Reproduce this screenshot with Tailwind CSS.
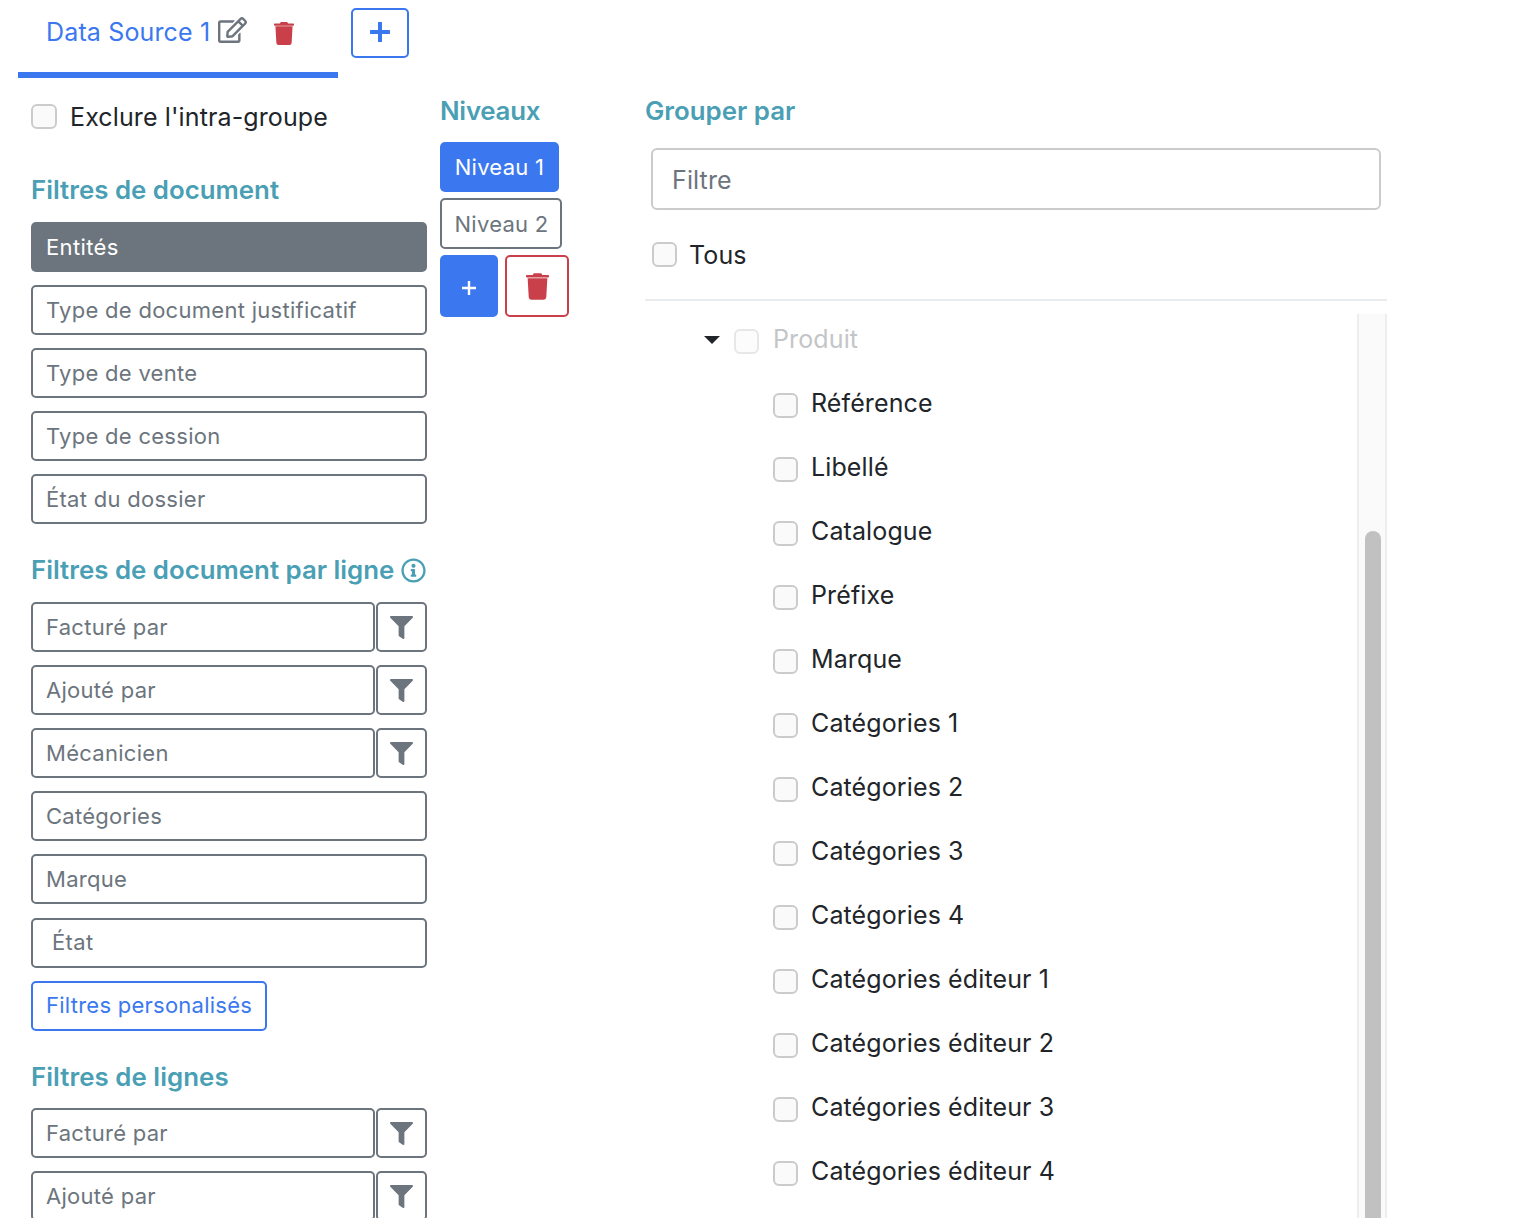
<!doctype html>
<html lang="fr"><head><meta charset="utf-8"><title>Data Source</title>
<script src="https://cdn.jsdelivr.net/npm/@tailwindcss/browser@4"></script></head>
<body class="bg-white font-[Inter,sans-serif] text-[25px] tracking-[0.12px] text-[#212529]">
<div class="h-[1218px] w-[1532px] overflow-hidden pl-[18px]">
  <div class="flex h-[78px] items-start">
    <div class="relative flex h-[78px] w-[320px] items-start border-b-[6px] border-[#3b78f0] pl-[28px] pt-[14px]">
      <span class="text-[#3b78f0] leading-[36px] tracking-[0.15px]">Data Source 1</span>
      <svg class="ml-[8px] mt-[3px] h-[26px] w-[29px] fill-[#6c757d]" viewBox="0 0 576 512"><path d="M402.3 344.9l32-32c5-5 13.7-1.5 13.7 5.7V464c0 26.5-21.5 48-48 48H48c-26.5 0-48-21.5-48-48V112c0-26.5 21.5-48 48-48h273.5c7.1 0 10.7 8.6 5.7 13.7l-32 32c-1.5 1.5-3.5 2.3-5.7 2.3H48v352h352V350.5c0-2.1.8-4.1 2.3-5.6zm156.6-201.8L296.3 405.7l-90.4 10c-26.2 2.9-48.5-19.2-45.6-45.6l10-90.4L432.9 17.1c22.9-22.9 59.9-22.9 82.7 0l43.2 43.2c22.9 22.9 22.9 60 .1 82.8zM460.1 174L402 115.9 216.2 301.8l-7.3 65.3 65.3-7.3L460.1 174zm64.8-79.7l-43.2-43.2c-4.1-4.1-10.8-4.1-14.8 0L436 82l58.1 58.1 30.9-30.9c4-4.2 4-10.8-.1-14.9z"/></svg>
      <svg class="ml-[27px] mt-[8px] h-[23px] w-[20px] fill-[#c9404a]" viewBox="0 0 448 512"><path d="M432 32H312l-3.6-23.4A24 24 0 0 0 286.9 0H161.1a24 24 0 0 0-21.4 13.3L135.6 32H16C7.2 32 0 39.2 0 48v16c0 8.8 7.2 16 16 16h416c8.8 0 16-7.2 16-16V48c0-8.8-7.2-16-16-16zM53.2 467a48 48 0 0 0 47.9 45h245.8a48 48 0 0 0 47.9-45L416 96H32z"/></svg>
    </div>
    <button class="ml-[13px] mt-[8px] flex h-[50px] w-[58px] items-center justify-center rounded-[5px] border-2 border-[#3b78f0] pb-[2px]">
      <svg class="h-[20px] w-[20px]" viewBox="0 0 20 20"><path d="M10 1v18M1 10h18" stroke="#3b78f0" stroke-width="4" stroke-linecap="round"/></svg>
    </button>
  </div>
  <div class="flex items-start">
    <!-- left -->
    <div class="ml-[13px] w-[396px]">
      <label class="mt-[26px] flex h-[26px] items-center">
        <span class="mb-[2px] h-[25px] w-[26px] rounded-[6px] border-2 border-[#c9cbcd] bg-[#fafafa]"></span>
        <span class="ml-[13px] mt-[2px]">Exclure l'intra-groupe</span>
      </label>
      <h5 class="mt-[44px] mb-[16px] text-[25.85px] font-semibold leading-[32px] tracking-normal text-[#4a9fb5]">Filtres de document</h5>
      <div class="mb-[13.1px] flex h-[50px] items-center rounded-[5px] bg-[#6c757d] px-[15px] text-[22px] tracking-[0.35px] text-white">Entités</div>
      <div class="mb-[13.1px] flex h-[50px] items-center rounded-[5px] border-2 border-[#6c757d] px-[13px] text-[22px] tracking-[0.28px] text-[#6c757d]">Type de document justificatif</div>
      <div class="mb-[13.1px] flex h-[50px] items-center rounded-[5px] border-2 border-[#6c757d] px-[13px] text-[22px] tracking-[0.28px] text-[#6c757d]">Type de vente</div>
      <div class="mb-[13.1px] flex h-[50px] items-center rounded-[5px] border-2 border-[#6c757d] px-[13px] text-[22px] tracking-[0.28px] text-[#6c757d]">Type de cession</div>
      <div class="mb-[13.1px] flex h-[50px] items-center rounded-[5px] border-2 border-[#6c757d] px-[13px] text-[22px] tracking-[0.28px] text-[#6c757d]">État du dossier</div>
      <h5 class="mt-[29.7px] mb-[16px] flex items-center whitespace-nowrap text-[25.85px] font-semibold leading-[32px] tracking-normal text-[#4a9fb5]">Filtres de document par ligne
        <svg class="ml-[7px] h-[25px] w-[25px] shrink-0 fill-[#4a9fb5]" viewBox="0 0 512 512"><path d="M256 8C119.043 8 8 119.083 8 256c0 136.997 111.043 248 248 248s248-111.003 248-248C504 119.083 392.957 8 256 8zm0 448c-110.532 0-200-89.431-200-200 0-110.495 89.472-200 200-200 110.491 0 200 89.471 200 200 0 110.53-89.431 200-200 200zm0-338c23.196 0 42 18.804 42 42s-18.804 42-42 42-42-18.804-42-42 18.804-42 42-42zm56 254c0 6.627-5.373 12-12 12h-88c-6.627 0-12-5.373-12-12v-24c0-6.627 5.373-12 12-12h12v-64h-12c-6.627 0-12-5.373-12-12v-24c0-6.627 5.373-12 12-12h64c6.627 0 12 5.373 12 12v100h12c6.627 0 12 5.373 12 12v24z"/></svg>
      </h5>
      <div class="mb-[13.1px] flex h-[50px] gap-[1px] text-[22px] tracking-[0.28px] text-[#6c757d]">
        <div class="flex flex-1 items-center rounded-[5px] border-2 border-[#6c757d] px-[13px]">Facturé par</div>
        <div class="flex w-[51px] items-center justify-center rounded-[5px] border-2 border-[#6c757d]"><svg class="h-[23px] w-[23px] fill-[#6c757d]" viewBox="0 0 512 512"><path d="M487.976 0H24.028C2.71 0-8.047 25.866 7.058 40.971L192 225.941V432c0 7.831 3.821 15.17 10.237 19.662l80 55.98C298.02 518.69 320 507.493 320 487.98V225.941l184.947-184.97C520.021 25.896 509.338 0 487.976 0z"/></svg></div>
      </div>
      <div class="mb-[13.1px] flex h-[50px] gap-[1px] text-[22px] tracking-[0.28px] text-[#6c757d]">
        <div class="flex flex-1 items-center rounded-[5px] border-2 border-[#6c757d] px-[13px]">Ajouté par</div>
        <div class="flex w-[51px] items-center justify-center rounded-[5px] border-2 border-[#6c757d]"><svg class="h-[23px] w-[23px] fill-[#6c757d]" viewBox="0 0 512 512"><path d="M487.976 0H24.028C2.71 0-8.047 25.866 7.058 40.971L192 225.941V432c0 7.831 3.821 15.17 10.237 19.662l80 55.98C298.02 518.69 320 507.493 320 487.98V225.941l184.947-184.97C520.021 25.896 509.338 0 487.976 0z"/></svg></div>
      </div>
      <div class="mb-[13.1px] flex h-[50px] gap-[1px] text-[22px] tracking-[0.28px] text-[#6c757d]">
        <div class="flex flex-1 items-center rounded-[5px] border-2 border-[#6c757d] px-[13px]">Mécanicien</div>
        <div class="flex w-[51px] items-center justify-center rounded-[5px] border-2 border-[#6c757d]"><svg class="h-[23px] w-[23px] fill-[#6c757d]" viewBox="0 0 512 512"><path d="M487.976 0H24.028C2.71 0-8.047 25.866 7.058 40.971L192 225.941V432c0 7.831 3.821 15.17 10.237 19.662l80 55.98C298.02 518.69 320 507.493 320 487.98V225.941l184.947-184.97C520.021 25.896 509.338 0 487.976 0z"/></svg></div>
      </div>
      <div class="mb-[13.1px] flex h-[50px] items-center rounded-[5px] border-2 border-[#6c757d] px-[13px] text-[22px] tracking-[0.28px] text-[#6c757d]">Catégories</div>
      <div class="mb-[13.1px] flex h-[50px] items-center rounded-[5px] border-2 border-[#6c757d] px-[13px] text-[22px] tracking-[0.28px] text-[#6c757d]">Marque</div>
      <div class="mb-[13.1px] flex h-[50px] items-center rounded-[5px] border-2 border-[#6c757d] px-[19px] text-[22px] tracking-[0.4px] text-[#6c757d]">État</div>
      <div class="flex h-[50px] w-[236px] items-center whitespace-nowrap rounded-[5px] border-2 border-[#3b78f0] px-[13px] text-[22px] tracking-[0.25px] text-[#3b78f0]">Filtres personalisés</div>
      <h5 class="mt-[30.5px] mb-[15px] text-[25.85px] font-semibold leading-[32px] tracking-[0.05px] text-[#4a9fb5]">Filtres de lignes</h5>
      <div class="mb-[13.1px] flex h-[50px] gap-[1px] text-[22px] tracking-[0.28px] text-[#6c757d]">
        <div class="flex flex-1 items-center rounded-[5px] border-2 border-[#6c757d] px-[13px]">Facturé par</div>
        <div class="flex w-[51px] items-center justify-center rounded-[5px] border-2 border-[#6c757d]"><svg class="h-[23px] w-[23px] fill-[#6c757d]" viewBox="0 0 512 512"><path d="M487.976 0H24.028C2.71 0-8.047 25.866 7.058 40.971L192 225.941V432c0 7.831 3.821 15.17 10.237 19.662l80 55.98C298.02 518.69 320 507.493 320 487.98V225.941l184.947-184.97C520.021 25.896 509.338 0 487.976 0z"/></svg></div>
      </div>
      <div class="flex h-[50px] gap-[1px] text-[22px] tracking-[0.28px] text-[#6c757d]">
        <div class="flex flex-1 items-center rounded-[5px] border-2 border-[#6c757d] px-[13px]">Ajouté par</div>
        <div class="flex w-[51px] items-center justify-center rounded-[5px] border-2 border-[#6c757d]"><svg class="h-[23px] w-[23px] fill-[#6c757d]" viewBox="0 0 512 512"><path d="M487.976 0H24.028C2.71 0-8.047 25.866 7.058 40.971L192 225.941V432c0 7.831 3.821 15.17 10.237 19.662l80 55.98C298.02 518.69 320 507.493 320 487.98V225.941l184.947-184.97C520.021 25.896 509.338 0 487.976 0z"/></svg></div>
      </div>
    </div>
    <!-- middle -->
    <div class="ml-[13px] w-[205px]">
      <h5 class="mt-[17px] mb-[15px] text-[25.85px] font-semibold leading-[32px] tracking-[-0.25px] text-[#4a9fb5]">Niveaux</h5>
      <div class="flex h-[50px] w-[119px] items-center justify-center rounded-[5px] bg-[#3b78f0] text-[22px] tracking-[0.28px] text-white">Niveau 1</div>
      <div class="mt-[6px] flex h-[51px] w-[122px] items-center justify-center rounded-[5px] border-2 border-[#6c757d] pl-[1px] pt-[1px] text-[22px] tracking-[0.28px] text-[#6c757d]">Niveau 2</div>
      <div class="mt-[6px] flex gap-[7px]">
        <div class="flex h-[62px] w-[58px] items-center justify-center rounded-[5px] bg-[#3b78f0] pt-[4px]"><svg class="h-[14px] w-[14px]" viewBox="0 0 14 14"><path d="M7 0v14M0 7h14" stroke="#fff" stroke-width="2.4"/></svg></div>
        <div class="flex h-[62px] w-[64px] items-center justify-center rounded-[5px] border-2 border-[#c9404a]"><svg class="h-[27px] w-[23px] fill-[#c9404a]" viewBox="0 0 448 512"><path d="M432 32H312l-3.6-23.4A24 24 0 0 0 286.9 0H161.1a24 24 0 0 0-21.4 13.3L135.6 32H16C7.2 32 0 39.2 0 48v16c0 8.8 7.2 16 16 16h416c8.8 0 16-7.2 16-16V48c0-8.8-7.2-16-16-16zM53.2 467a48 48 0 0 0 47.9 45h245.8a48 48 0 0 0 47.9-45L416 96H32z"/></svg></div>
      </div>
    </div>
    <!-- right -->
    <div class="w-[742px]">
      <h5 class="mt-[17px] text-[25.85px] font-semibold leading-[32px] tracking-normal text-[#4a9fb5]">Grouper par</h5>
      <div class="mx-[6px] mt-[21px] flex h-[62px] items-center rounded-[6px] border-2 border-[#c9cbcd] px-[19px] pt-[3px] text-[#6c757d]">Filtre</div>
      <label class="ml-[7px] mt-[32px] flex h-[26px] items-center">
        <span class="mb-[2px] h-[25px] w-[25px] rounded-[6px] border-2 border-[#c9cbcd] bg-[#fafafa]"></span>
        <span class="ml-[12px] mt-[2px]">Tous</span>
      </label>
      <div class="mt-[31px] h-[2px] bg-[#e9ecef]"></div>
      <div class="relative h-[920px] pt-[7px]">
        <div class="absolute right-0 top-[13px] h-[920px] w-[30px] border-x-2 border-[#eeeeee] bg-[#fafafa]">
          <div class="absolute left-[6px] top-[217px] h-[760px] w-[16px] rounded-full bg-[#c1c1c1]"></div>
        </div>
        <div class="flex h-[64px] items-center pl-[59px] text-[#c3c5c7]">
          <svg class="h-[8px] w-[16px]" viewBox="0 0 16 8"><path d="M0 0h16L8 8z" fill="#212529"/></svg>
          <span class="ml-[14px] mt-[3px] h-[25px] w-[25px] rounded-[6px] border-2 border-[#e6e7e8] bg-[#fcfcfc]"></span>
          <span class="ml-[14px]">Produit</span>
        </div>
        <div class="flex h-[64px] items-center pl-[128px]"><span class="mt-[3px] h-[25px] w-[25px] rounded-[6px] border-2 border-[#c9cbcd] bg-[#fafafa]"></span><span class="ml-[13px]">Référence</span></div>
        <div class="flex h-[64px] items-center pl-[128px]"><span class="mt-[3px] h-[25px] w-[25px] rounded-[6px] border-2 border-[#c9cbcd] bg-[#fafafa]"></span><span class="ml-[13px]">Libellé</span></div>
        <div class="flex h-[64px] items-center pl-[128px]"><span class="mt-[3px] h-[25px] w-[25px] rounded-[6px] border-2 border-[#c9cbcd] bg-[#fafafa]"></span><span class="ml-[13px]">Catalogue</span></div>
        <div class="flex h-[64px] items-center pl-[128px]"><span class="mt-[3px] h-[25px] w-[25px] rounded-[6px] border-2 border-[#c9cbcd] bg-[#fafafa]"></span><span class="ml-[13px]">Préfixe</span></div>
        <div class="flex h-[64px] items-center pl-[128px]"><span class="mt-[3px] h-[25px] w-[25px] rounded-[6px] border-2 border-[#c9cbcd] bg-[#fafafa]"></span><span class="ml-[13px]">Marque</span></div>
        <div class="flex h-[64px] items-center pl-[128px]"><span class="mt-[3px] h-[25px] w-[25px] rounded-[6px] border-2 border-[#c9cbcd] bg-[#fafafa]"></span><span class="ml-[13px]">Catégories 1</span></div>
        <div class="flex h-[64px] items-center pl-[128px]"><span class="mt-[3px] h-[25px] w-[25px] rounded-[6px] border-2 border-[#c9cbcd] bg-[#fafafa]"></span><span class="ml-[13px]">Catégories 2</span></div>
        <div class="flex h-[64px] items-center pl-[128px]"><span class="mt-[3px] h-[25px] w-[25px] rounded-[6px] border-2 border-[#c9cbcd] bg-[#fafafa]"></span><span class="ml-[13px]">Catégories 3</span></div>
        <div class="flex h-[64px] items-center pl-[128px]"><span class="mt-[3px] h-[25px] w-[25px] rounded-[6px] border-2 border-[#c9cbcd] bg-[#fafafa]"></span><span class="ml-[13px]">Catégories 4</span></div>
        <div class="flex h-[64px] items-center pl-[128px]"><span class="mt-[3px] h-[25px] w-[25px] rounded-[6px] border-2 border-[#c9cbcd] bg-[#fafafa]"></span><span class="ml-[13px]">Catégories éditeur 1</span></div>
        <div class="flex h-[64px] items-center pl-[128px]"><span class="mt-[3px] h-[25px] w-[25px] rounded-[6px] border-2 border-[#c9cbcd] bg-[#fafafa]"></span><span class="ml-[13px]">Catégories éditeur 2</span></div>
        <div class="flex h-[64px] items-center pl-[128px]"><span class="mt-[3px] h-[25px] w-[25px] rounded-[6px] border-2 border-[#c9cbcd] bg-[#fafafa]"></span><span class="ml-[13px]">Catégories éditeur 3</span></div>
        <div class="flex h-[64px] items-center pl-[128px]"><span class="mt-[3px] h-[25px] w-[25px] rounded-[6px] border-2 border-[#c9cbcd] bg-[#fafafa]"></span><span class="ml-[13px]">Catégories éditeur 4</span></div>
      </div>
    </div>
  </div>
</div>
</body></html>
